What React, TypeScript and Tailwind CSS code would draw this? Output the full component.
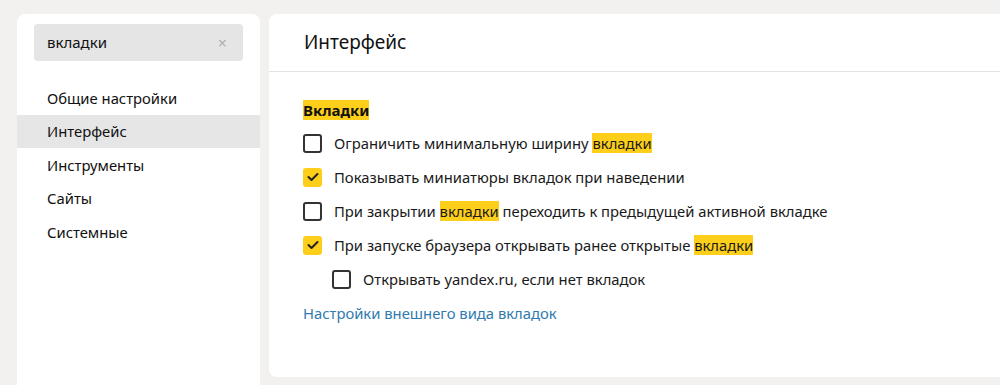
import { ReactNode } from "react";

const navItems = ["Общие настройки", "Интерфейс", "Инструменты", "Сайты", "Системные"];

function Mark({ children }: { children: ReactNode }) {
  return <span className="bg-[#fdcf1b]">{children}</span>;
}

function Checkbox({ checked }: { checked: boolean }) {
  if (checked) {
    return (
      <span className="w-[19px] h-[19px] rounded-[3px] bg-[#fdcf1b] flex items-center justify-center shrink-0">
        <svg width="12" height="10" viewBox="0 0 12 10" fill="none">
          <path d="M1.5 5 L4.5 8 L10.5 2" stroke="#222" strokeWidth="2" strokeLinecap="round" strokeLinejoin="round" />
        </svg>
      </span>
    );
  }
  return <span className="w-[19px] h-[19px] rounded-[3px] border-2 border-[#333] shrink-0" />;
}

function Row({ checked, children, indent }: { checked: boolean; children: ReactNode; indent?: boolean }) {
  return (
    <div className={"flex items-center gap-[12px] h-[34px] " + (indent ? "pl-[29px]" : "")}>
      <Checkbox checked={checked} />
      <span className="text-[14.8px] text-[#1a1a1a]">{children}</span>
    </div>
  );
}

export default function App() {
  return (
    <div
      className="w-[1000px] h-[385px] bg-[#f2f1ef] flex gap-[9px] pl-[17px] pt-[14px] overflow-hidden"
      style={{ fontFamily: '"Noto Sans", "Open Sans", sans-serif' }}
    >
      <aside className="w-[243px] h-[380px] bg-white rounded-t-[8px] flex flex-col pt-[10px] shrink-0">
        <div className="mx-[17px] h-[37px] bg-[#e5e5e5] rounded-[4px] flex items-center justify-between pl-[13px] pr-[16px]">
          <span className="text-[15px] text-[#111]">вкладки</span>
          <span className="text-[16px] text-[#b0b0b0] leading-none">×</span>
        </div>
        <nav className="mt-[20px] flex flex-col">
          {navItems.map((n) => (
            <div
              key={n}
              className={"h-[33.5px] flex items-center pl-[30px] text-[14.8px] text-[#111] " + (n === "Интерфейс" ? "bg-[#e6e6e6]" : "")}
            >
              {n}
            </div>
          ))}
        </nav>
      </aside>
      <main className="flex-1 h-[363px] bg-white rounded-l-[8px] flex flex-col">
        <header className="h-[58px] border-b border-[#e3e3e3] flex items-center pl-[35px]">
          <h1 className="text-[19px] text-[#111]">Интерфейс</h1>
        </header>
        <section className="pl-[34px] pt-[27px] flex flex-col">
          <h2 className="text-[15px] font-bold text-[#111] leading-[22px] mb-[5px]">
            <Mark>Вкладки</Mark>
          </h2>
          <Row checked={false}>
            Ограничить минимальную ширину <Mark>вкладки</Mark>
          </Row>
          <Row checked>Показывать миниатюры вкладок при наведении</Row>
          <Row checked={false}>
            При закрытии <Mark>вкладки</Mark> переходить к предыдущей активной вкладке
          </Row>
          <Row checked>
            При запуске браузера открывать ранее открытые <Mark>вкладки</Mark>
          </Row>
          <Row checked={false} indent>
            Открывать yandex.ru, если нет вкладок
          </Row>
          <a className="text-[14.8px] text-[#2f7bb0] mt-[6px] leading-[22px]">Настройки внешнего вида вкладок</a>
        </section>
      </main>
    </div>
  );
}
